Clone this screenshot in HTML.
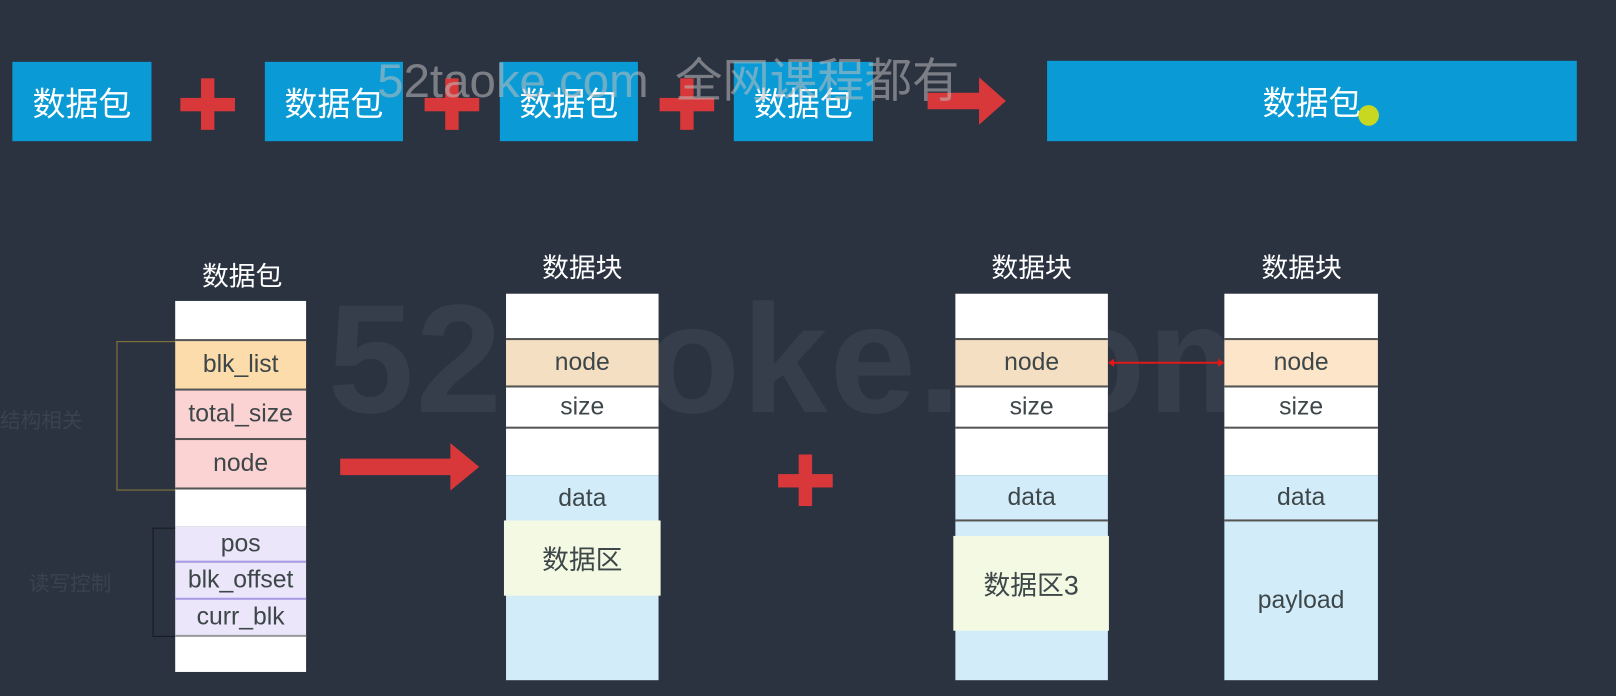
<!DOCTYPE html>
<html><head><meta charset="utf-8"><style>
*{margin:0;padding:0;box-sizing:border-box}
body{width:1616px;height:695px;background:#2b3240;position:relative;overflow:hidden;font-family:"Liberation Sans","Noto Sans CJK SC",sans-serif}
#w{position:absolute;left:0;top:0;width:1568px;height:675px;transform:scale(1.0306);transform-origin:0 0}
.a{position:absolute}
.bb{position:absolute;background:#0a9bd6;color:#fff;font-size:32px;display:flex;align-items:center;justify-content:center;top:60px;height:77px}
.plus{position:absolute;width:53px;height:50px}
.plus:before{content:"";position:absolute;left:0;right:0;top:19px;height:13px;background:#d9383a}
.plus:after{content:"";position:absolute;top:0;bottom:0;left:20px;width:13px;background:#d9383a}
.r{position:absolute;display:flex;align-items:center;justify-content:center;color:#3d4648;font-size:24px;border-bottom:2px solid #555}
.t{position:absolute;color:#fff;font-size:26px;text-align:center;width:160px}
</style></head><body><div id="w">
<div class="a" style="left:318px;top:262px;font-size:150px;font-weight:bold;color:rgba(255,255,255,0.06);letter-spacing:2px;white-space:nowrap">52taoke.com</div>

<div class="bb" style="left:12px;width:135px">数据包</div>
<div class="plus" style="left:175px;top:76px"></div>
<div class="bb" style="left:257px;width:134px">数据包</div>
<div class="plus" style="left:412px;top:76px"></div>
<div class="bb" style="left:485px;width:134px">数据包</div>
<div class="plus" style="left:640px;top:76px"></div>
<div class="bb" style="left:712px;width:135px">数据包</div>
<svg class="a" style="left:900px;top:75px" width="78" height="46"><polygon points="0,15 50,15 50,0 76,23 50,46 50,31 0,31" fill="#d9383a"/></svg>
<div class="bb" style="left:1016px;width:514px;top:59px;height:78px">数据包</div>
<div class="a" style="left:1318px;top:102px;width:20px;height:20px;border-radius:50%;background:#c8d820"></div>
<div class="a" style="left:366px;top:42px;font-size:46px;color:rgba(190,190,190,0.55);white-space:nowrap">52taoke.com&nbsp; 全网课程都有</div>

<div class="t" style="left:155px;top:248px">数据包</div>
<div class="a" style="left:113px;top:331px;width:57px;height:145px;border:1.5px solid #8a7a3a;border-right:none"></div>
<div class="a" style="left:148px;top:512px;width:22px;height:106px;border:1.5px solid #151a22;border-right:none"></div>
<div class="a" style="left:0;top:392px;font-size:20px;color:rgba(255,255,255,0.08)">结构相关</div>
<div class="a" style="left:28px;top:550px;font-size:20px;color:rgba(255,255,255,0.08)">读写控制</div>
<div class="r" style="left:170px;top:292px;width:127px;height:39px;background:#fff"></div>
<div class="r" style="left:170px;top:331px;width:127px;height:48px;background:#fcdcaa">blk_list</div>
<div class="r" style="left:170px;top:379px;width:127px;height:48px;background:#fcd3d3">total_size</div>
<div class="r" style="left:170px;top:427px;width:127px;height:48px;background:#fcd3d3">node</div>
<div class="r" style="left:170px;top:475px;width:127px;height:36px;background:#fff;border:none"></div>
<div class="r" style="left:170px;top:511px;width:127px;height:35px;background:#ebe6fa;border-color:#a99be8">pos</div>
<div class="r" style="left:170px;top:546px;width:127px;height:36px;background:#ebe6fa;border-color:#a99be8">blk_offset</div>
<div class="r" style="left:170px;top:582px;width:127px;height:36px;background:#ebe6fa;border-color:#999">curr_blk</div>
<div class="r" style="left:170px;top:618px;width:127px;height:34px;background:#fff;border:none"></div>

<svg class="a" style="left:330px;top:430px" width="137" height="46"><polygon points="0,15 107,15 107,0 135,23 107,46 107,31 0,31" fill="#d9383a"/></svg>
<div class="plus" style="left:755px;top:441px"></div>

<div class="t" style="left:485px;top:240px">数据块</div>
<div class="r" style="left:491px;top:285px;width:148px;height:45px;background:#fff"></div>
<div class="r" style="left:491px;top:330px;width:148px;height:46px;background:#f5dfc3">node</div>
<div class="r" style="left:491px;top:376px;width:148px;height:40px;background:#fff">size</div>
<div class="r" style="left:491px;top:416px;width:148px;height:45px;background:#fff;border:none"></div>
<div class="r" style="left:491px;top:461px;width:148px;height:45px;background:#d2ecf9;border:none">data</div>
<div class="r" style="left:491px;top:506px;width:148px;height:154px;background:#d2ecf9;border:none"></div>
<div class="r" style="left:489px;top:505px;width:152px;height:73px;background:#f4f9e3;border:none;font-size:26px">数据区</div>

<div class="t" style="left:921px;top:240px">数据块</div>
<div class="r" style="left:927px;top:285px;width:148px;height:45px;background:#fff"></div>
<div class="r" style="left:927px;top:330px;width:148px;height:46px;background:#f5dfc3">node</div>
<div class="r" style="left:927px;top:376px;width:148px;height:40px;background:#fff">size</div>
<div class="r" style="left:927px;top:416px;width:148px;height:45px;background:#fff;border:none"></div>
<div class="r" style="left:927px;top:461px;width:148px;height:45px;background:#d2ecf9">data</div>
<div class="r" style="left:927px;top:506px;width:148px;height:154px;background:#d2ecf9;border:none"></div>
<div class="r" style="left:925px;top:520px;width:151px;height:92px;background:#f4f9e3;border:none;font-size:26px">数据区3</div>

<svg class="a" style="left:1075px;top:346px" width="113" height="12"><line x1="4" y1="6" x2="109" y2="6" stroke="#e01818" stroke-width="2"/><polygon points="0,6 6,2 6,10" fill="#e01818"/><polygon points="113,6 107,2 107,10" fill="#e01818"/></svg>

<div class="t" style="left:1183px;top:240px">数据块</div>
<div class="r" style="left:1188px;top:285px;width:149px;height:45px;background:#fff"></div>
<div class="r" style="left:1188px;top:330px;width:149px;height:46px;background:#fde5c9">node</div>
<div class="r" style="left:1188px;top:376px;width:149px;height:40px;background:#fff">size</div>
<div class="r" style="left:1188px;top:416px;width:149px;height:45px;background:#fff;border:none"></div>
<div class="r" style="left:1188px;top:461px;width:149px;height:45px;background:#d2ecf9">data</div>
<div class="r" style="left:1188px;top:506px;width:149px;height:154px;background:#d2ecf9;border:none">payload</div>
</div></body></html>
